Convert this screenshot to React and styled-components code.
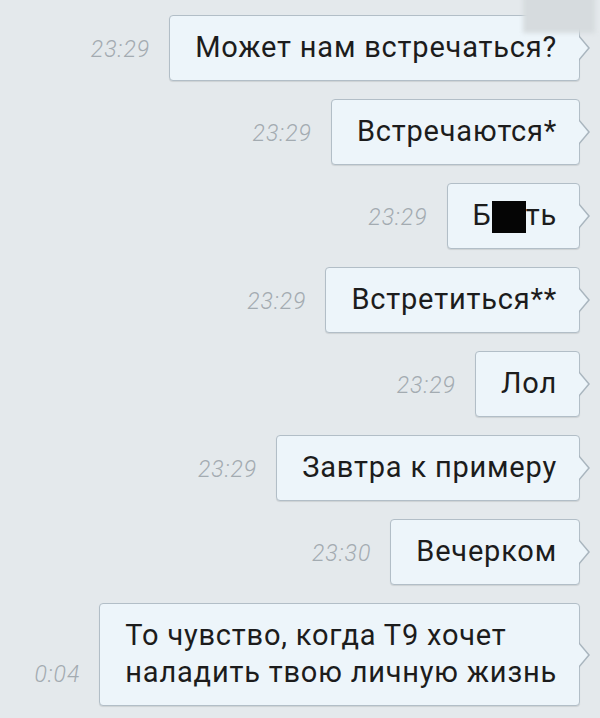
import React from "react";
import styled, { createGlobalStyle } from "styled-components";

const GlobalStyle = createGlobalStyle`
  html, body {
    margin: 0;
    padding: 0;
    background: #e4e9ec;
  }
`;

const Screen = styled.div`
  position: relative;
  width: 600px;
  height: 718px;
  overflow: hidden;
  background: #e4e9ec;
  display: flex;
  flex-direction: column;
  gap: 18px;
  padding: 15px 20px 0 0;
  box-sizing: border-box;
  font-family: Roboto, "Noto Sans", sans-serif;
`;

const Row = styled.div`
  display: flex;
  justify-content: flex-end;
  align-items: last baseline;
  gap: 19px;
`;

const Time = styled.span`
  font-size: 23px;
  font-style: italic;
  font-weight: 300;
  color: #a3abb1;
  letter-spacing: 1px;
`;

const Bubble = styled.div`
  position: relative;
  background: #edf5fa;
  border: 1px solid #b2bec7;
  border-radius: 4px;
  box-shadow: 0 1px 1px rgba(0, 0, 0, 0.1);
  padding: 13px 22px 14px 25px;
  font-size: 29px;
  line-height: 37px;
  letter-spacing: 0.8px;
  color: #1c1c1c;
  white-space: nowrap;

  &::before,
  &::after {
    content: "";
    position: absolute;
    top: 50%;
    width: 0;
    height: 0;
    border-top: 13px solid transparent;
    border-bottom: 13px solid transparent;
    transform: translateY(-50%);
  }
  &::before {
    right: -11px;
    border-left: 11px solid #a9b5be;
  }
  &::after {
    right: -9px;
    border-top-width: 12px;
    border-bottom-width: 12px;
    border-left: 10px solid #edf5fa;
  }
`;

const Censor = styled.span`
  display: inline-block;
  width: 34px;
  height: 32px;
  background: #050505;
  vertical-align: -8px;
`;

const Smudge = styled.div`
  position: absolute;
  top: -4px;
  right: 5px;
  width: 72px;
  height: 37px;
  background: #d6dbde;
  filter: blur(2px);
`;

const messages = [
  { time: "23:29", text: "Может нам встречаться?" },
  { time: "23:29", text: "Встречаются*" },
  { time: "23:29", text: <>Б<Censor />ть</> },
  { time: "23:29", text: "Встретиться**" },
  { time: "23:29", text: "Лол" },
  { time: "23:29", text: "Завтра к примеру" },
  { time: "23:30", text: "Вечерком" },
  {
    time: "0:04",
    text: (
      <>
        То чувство, когда Т9 хочет
        <br />
        наладить твою личную жизнь
      </>
    ),
  },
];

export default function App() {
  return (
    <>
      <GlobalStyle />
      <Screen>
        {messages.map((m, i) => (
          <Row key={i}>
            <Time>{m.time}</Time>
            <Bubble>{m.text}</Bubble>
          </Row>
        ))}
        <Smudge />
      </Screen>
    </>
  );
}
